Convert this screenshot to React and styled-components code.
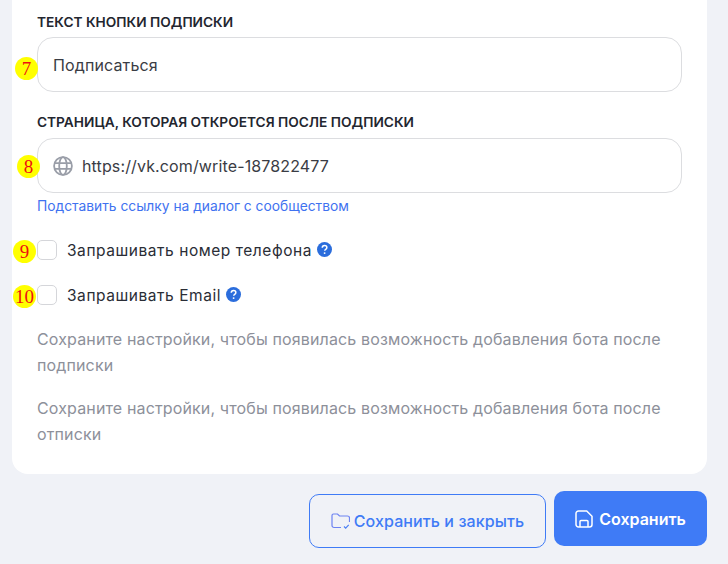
import React from 'react';
import styled, { createGlobalStyle } from 'styled-components';

const GlobalStyle = createGlobalStyle`
  html, body {
    margin: 0;
    padding: 0;
    background: #f0f2f7;
    font-family: 'Inter', 'Noto Sans', sans-serif;
    overflow: hidden;
  }
`;

const HelpIcon = () => (
  <HelpSvg viewBox='0 0 16 16'>
    <circle cx='8' cy='8' r='8' fill='#2b6ddc' />
    <path d='M5.6 6.2c0-1.4 1-2.4 2.5-2.4s2.4.9 2.4 2.1c0 1-.5 1.5-1.3 2-.6.4-.9.7-.9 1.4' fill='none' stroke='#fff' strokeWidth='1.6' />
    <circle cx='8.1' cy='11.8' r='1' fill='#fff' />
  </HelpSvg>
);

const GlobeIcon = () => (
  <svg width='20' height='20' viewBox='0 0 20 20' fill='none' stroke='#9a9ea8' strokeWidth='1.8'>
    <circle cx='10' cy='10' r='8.9' />
    <ellipse cx='10' cy='10' rx='3.8' ry='8.9' />
    <path d='M1.8 7.2h16.4M1.8 12.8h16.4' />
  </svg>
);

const FolderIcon = () => (
  <svg width='19' height='17' viewBox='0 0 19 17' fill='none' stroke='#6d83f2' strokeWidth='1.2'>
    <path d='M10 14.5H3A2 2 0 0 1 1 12.5V2.5A1.5 1.5 0 0 1 2.5 1h4l2 2h8A2 2 0 0 1 18.5 5v4' />
    <path d='M13 13.5l1.7 1.6 3-3.2' stroke='#4b7ff5' />
  </svg>
);

const SaveIcon = () => (
  <svg width='18' height='18' viewBox='0 0 18 18' fill='none' stroke='#fff' strokeWidth='1.5'>
    <path d='M3.5 1h8.2L17 6.2v8.3a2.5 2.5 0 0 1-2.5 2.5h-11A2.5 2.5 0 0 1 1 14.5v-11A2.5 2.5 0 0 1 3.5 1z' />
    <path d='M5 17v-5.5a1 1 0 0 1 1-1h6a1 1 0 0 1 1 1V17' />
  </svg>
);

const App = () => (
  <Page>
    <GlobalStyle />
    <Card>
      <Label>Текст кнопки подписки</Label>
      <InputBox>
        <Marker $left={-23} $top={19}>7</Marker>
        <InputText>Подписаться</InputText>
      </InputBox>
      <Label $top={22}>Страница, которая откроется после подписки</Label>
      <InputBox>
        <Marker $left={-21} $top={16}>8</Marker>
        <GlobeIcon />
        <InputText>https://vk.com/write-187822477</InputText>
      </InputBox>
      <HelperLink>Подставить ссылку на диалог с сообществом</HelperLink>
      <CheckRow $top={26}>
        <Marker $left={-24} $top={0}>9</Marker>
        <CheckBox />
        <CheckLabel>Запрашивать номер телефона</CheckLabel>
        <HelpIcon />
      </CheckRow>
      <CheckRow $top={25}>
        <Marker $left={-24} $top={0}>10</Marker>
        <CheckBox />
        <CheckLabel>Запрашивать Email</CheckLabel>
        <HelpIcon />
      </CheckRow>
      <Hint $top={22}>Сохраните настройки, чтобы появилась возможность добавления бота после подписки</Hint>
      <Hint $top={18}>Сохраните настройки, чтобы появилась возможность добавления бота после отписки</Hint>
    </Card>
    <Footer>
      <OutlineButton>
        <FolderIcon />
        Сохранить и закрыть
      </OutlineButton>
      <PrimaryButton>
        <SaveIcon />
        Сохранить
      </PrimaryButton>
    </Footer>
  </Page>
);

export default App;

const Page = styled.div`
  width: 728px;
  height: 564px;
  padding: 0 21px 0 12px;
  box-sizing: border-box;
`;
const Card = styled.div`
  height: 474px;
  box-sizing: border-box;
  padding: 14px 25px 0;
  background: #fff;
  border-radius: 0 0 16px 16px;
`;
const Label = styled.div`
  margin-top: ${(p) => p.$top || 0}px;
  margin-bottom: ${(p) => (p.$top ? 8 : 7)}px;
  font-size: 13.7px;
  line-height: 16px;
  font-weight: 600;
  text-transform: uppercase;
  color: #23262f;
`;
const InputBox = styled.div`
  position: relative;
  height: 55px;
  box-sizing: border-box;
  display: flex;
  align-items: center;
  gap: 9px;
  padding: 0 15px;
  border: 1px solid #dcdde0;
  border-radius: 16px;
`;
const InputText = styled.span`
  font-size: 16px;
  color: #3a3c44;
  letter-spacing: 0.13px;
`;
const Marker = styled.span`
  position: absolute;
  left: ${(p) => p.$left}px;
  top: ${(p) => p.$top}px;
  width: 23px;
  height: 23px;
  border-radius: 50%;
  background: #ffff00;
  color: #ee1010;
  font-family: 'Liberation Serif', serif;
  font-size: 19px;
  display: flex;
  align-items: center;
  justify-content: center;
`;
const HelperLink = styled.div`
  margin-top: 5px;
  font-size: 13.8px;
  line-height: 16px;
  color: #3f72f0;
`;
const CheckRow = styled.div`
  position: relative;
  margin-top: ${(p) => p.$top}px;
  display: flex;
  align-items: center;
  height: 20px;
`;
const CheckBox = styled.span`
  position: relative;
  width: 18px;
  height: 18px;
  background: #fff;
  border: 1px solid #d5d6da;
  border-radius: 5px;
  margin-right: 10px;
`;
const CheckLabel = styled.span`
  font-size: 15.5px;
  font-weight: 400;
  color: #2a2d36;
  letter-spacing: 0.55px;
`;
const HelpSvg = styled.svg`
  width: 15px;
  height: 15px;
  margin-left: 5px;
  margin-top: -1px;
`;
const Hint = styled.div`
  margin-top: ${(p) => p.$top}px;
  font-size: 16px;
  line-height: 25.5px;
  letter-spacing: 0.14px;
  color: #8d909a;
`;
const Footer = styled.div`
  display: flex;
  justify-content: flex-end;
  align-items: flex-start;
  gap: 8px;
  margin-top: 17px;
`;
const OutlineButton = styled.div`
  width: 237px;
  height: 54px;
  margin-top: 3px;
  box-sizing: border-box;
  display: flex;
  align-items: center;
  justify-content: center;
  gap: 4px;
  border: 1px solid #3f7bf6;
  border-radius: 10px;
  font-size: 16px;
  font-weight: 500;
  letter-spacing: 0.1px;
  color: #3f7bf6;
`;
const PrimaryButton = styled.div`
  width: 153px;
  height: 55px;
  display: flex;
  align-items: center;
  justify-content: center;
  gap: 6px;
  background: #3f7bf6;
  border-radius: 10px;
  font-size: 16px;
  font-weight: 600;
  color: #fff;
`;
